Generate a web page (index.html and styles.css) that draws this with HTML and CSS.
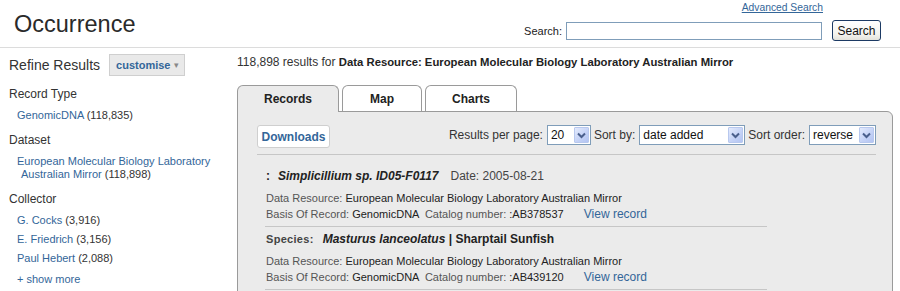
FILE: index.html
```html
<!DOCTYPE html>
<html lang="en">
<head>
<meta charset="utf-8">
<title>Occurrence</title>
<link rel="stylesheet" href="styles.css">
</head>
<body>
<header class="top">
  <h1 class="title">Occurrence</h1>
  <div class="search-area">
    <a class="adv" href="#">Advanced Search</a>
    <div class="search-row">
      <span class="search-label">Search:</span>
      <span class="search-input"></span>
      <span class="xp-btn">Search</span>
    </div>
  </div>
</header>

<div class="main">
  <aside class="sidebar">
    <div class="refine-row">
      <span class="refine-title">Refine Results</span>
      <span class="customise">customise <span class="caret">&#9662;</span></span>
    </div>

    <h3 class="facet">Record Type</h3>
    <ul class="facet-list">
      <li><a href="#">GenomicDNA</a> (118,835)</li>
    </ul>

    <h3 class="facet">Dataset</h3>
    <ul class="facet-list">
      <li><a href="#">European Molecular Biology Laboratory</a><br><a class="indent" href="#">Australian Mirror</a> (118,898)</li>
    </ul>

    <h3 class="facet">Collector</h3>
    <ul class="facet-list">
      <li><a href="#">G. Cocks</a> (3,916)</li>
      <li><a href="#">E. Friedrich</a> (3,156)</li>
      <li><a href="#">Paul Hebert</a> (2,088)</li>
      <li class="more"><a href="#">+ show more</a></li>
    </ul>
  </aside>

  <section class="content">
    <p class="summary">118,898 results for <b>Data Resource: European Molecular Biology Laboratory Australian Mirror</b></p>

    <div class="tabs">
      <span class="tab active tab-records">Records</span>
      <span class="tab tab-map">Map</span>
      <span class="tab tab-charts">Charts</span>
    </div>

    <div class="panel">
      <div class="toolbar">
        <span class="downloads">Downloads</span>
        <div class="sorts">
          <span class="lbl">Results per page:</span>
          <span class="sel sel-20"><span class="sel-val">20</span><span class="sel-arrow"><svg width="9" height="7" viewBox="0 0 9 7"><path d="M1 1.5 L4.5 5 L8 1.5" fill="none" stroke="#4a5f8c" stroke-width="2"/></svg></span></span>
          <span class="lbl">Sort by:</span>
          <span class="sel sel-date"><span class="sel-val">date added</span><span class="sel-arrow"><svg width="9" height="7" viewBox="0 0 9 7"><path d="M1 1.5 L4.5 5 L8 1.5" fill="none" stroke="#4a5f8c" stroke-width="2"/></svg></span></span>
          <span class="lbl">Sort order:</span>
          <span class="sel sel-order"><span class="sel-val">reverse</span><span class="sel-arrow"><svg width="9" height="7" viewBox="0 0 9 7"><path d="M1 1.5 L4.5 5 L8 1.5" fill="none" stroke="#4a5f8c" stroke-width="2"/></svg></span></span>
        </div>
      </div>

      <div class="records">
        <div class="record">
          <div class="rec-title"><b class="colon">:</b><b><i>Simplicillium sp. ID05-F0117</i></b><span class="rec-date">Date: 2005-08-21</span></div>
          <div class="rec-line"><span class="k">Data Resource:</span> European Molecular Biology Laboratory Australian Mirror</div>
          <div class="rec-line"><span class="k">Basis Of Record:</span> GenomicDNA <span class="k cat">Catalog number:</span> :AB378537 <a class="view" href="#">View record</a></div>
        </div>
        <div class="record">
          <div class="rec-title"><span class="species">Species:</span><b><i>Masturus lanceolatus</i></b> <b>| Sharptail Sunfish</b></div>
          <div class="rec-line"><span class="k">Data Resource:</span> European Molecular Biology Laboratory Australian Mirror</div>
          <div class="rec-line"><span class="k">Basis Of Record:</span> GenomicDNA <span class="k cat">Catalog number:</span> :AB439120 <a class="view" href="#">View record</a></div>
        </div>
      </div>
    </div>
  </section>
</div>
</body>
</html>
```

FILE: styles.css
```css
* { box-sizing: border-box; }

html, body {
  margin: 0;
  padding: 0;
  background: #fff;
  font-family: "Liberation Sans", Arial, sans-serif;
  color: #333;
  overflow: hidden;
}

a { color: #336699; text-decoration: none; }

/* ---------- header ---------- */
.top {
  display: flex;
  justify-content: space-between;
  align-items: flex-start;
  height: 48px;
  border-bottom: 1px solid #dcdcdc;
  padding: 0 19px 0 14px;
}

.title {
  margin: 10px 0 0;
  font-size: 23.5px;
  line-height: 28px;
  font-weight: normal;
  color: #2a2a2a;
}

.search-area {
  display: flex;
  flex-direction: column;
  align-items: flex-end;
  padding-top: 2px;
}

.adv {
  font-size: 10.3px;
  line-height: 12px;
  text-decoration: underline;
  margin-right: 58px;
  margin-bottom: 6px;
}

.search-row {
  display: flex;
  align-items: center;
  height: 21px;
}

.search-label {
  font-size: 11px;
  color: #222;
  margin-right: 4px;
}

.search-input {
  display: block;
  width: 256px;
  height: 18px;
  border: 1px solid #7f9db9;
  background: #fff;
  margin-right: 10px;
}

.xp-btn {
  display: flex;
  align-items: center;
  justify-content: center;
  width: 49px;
  height: 21px;
  border: 1px solid #1c3a64;
  border-radius: 3px;
  background: linear-gradient(#ffffff, #f3f3ee 70%, #e3e2da);
  font-size: 12px;
  color: #111;
}

/* ---------- main ---------- */
.main {
  display: flex;
  align-items: flex-start;
}

.sidebar {
  width: 237px;
  flex: none;
  padding: 6px 0 0 9px;
}

.refine-row {
  display: flex;
  align-items: center;
  height: 22px;
}

.refine-title {
  font-size: 14px;
  color: #333;
  margin-right: 9px;
}

.customise {
  display: flex;
  align-items: center;
  height: 22px;
  padding: 0 5px 0 6px;
  border: 1px solid #cfcfcf;
  background: #e9e9e9;
  font-size: 11px;
  font-weight: bold;
  color: #336699;
}

.caret {
  color: #888;
  font-size: 9px;
  margin-left: 4px;
  font-weight: normal;
}

.facet {
  margin: 10px 0 0;
  font-size: 12px;
  line-height: 16px;
  font-weight: normal;
  color: #333;
}

.facet-list {
  list-style: none;
  margin: 0;
  padding: 1px 0 0 8px;
  font-size: 11px;
  line-height: 13px;
  color: #333;
}

.facet-list li { margin-top: 6px; }

.facet-list .indent { margin-left: 4px; }

.facet-list li.more { margin-top: 8px; }

/* ---------- content ---------- */
.content {
  flex: 1;
  padding-top: 6px;
  margin-right: 7px;
}

.summary {
  margin: 0;
  font-size: 12px;
  line-height: 16px;
  color: #333;
}

.summary b {
  color: #222;
  font-size: 11.3px;
}

.tabs {
  display: flex;
  gap: 3px;
  margin-top: 15px;
  height: 26px;
}

.tab {
  display: flex;
  align-items: center;
  justify-content: center;
  height: 26px;
  border: 1px solid #9a9a9a;
  border-bottom: none;
  border-radius: 6px 6px 0 0;
  background: #fff;
  font-size: 12px;
  font-weight: bold;
  color: #222;
}

.tab.active {
  position: relative;
  height: 27px;
  margin-bottom: -1px;
  background: #ebebeb;
  z-index: 1;
}

.tab-records { width: 102px; }
.tab-map { width: 80px; }
.tab-charts { width: 92px; }

.panel {
  border: 1px solid #9a9a9a;
  border-radius: 0 6px 0 0;
  background: #ebebeb;
  padding: 12px 16px 20px 19px;
}

.toolbar {
  display: flex;
  justify-content: space-between;
  align-items: flex-start;
  padding-bottom: 6px;
  border-bottom: 1px solid #c6c6c6;
}

.downloads {
  display: flex;
  align-items: center;
  justify-content: center;
  margin-top: 1px;
  width: 73px;
  height: 23px;
  border: 1px solid #cfcfcf;
  border-radius: 3px;
  background: #fff;
  font-size: 12px;
  font-weight: bold;
  color: #336699;
}

.sorts {
  display: flex;
  align-items: center;
  gap: 3px;
  height: 20px;
  margin-top: 1px;
}

.lbl {
  font-size: 12px;
  color: #333;
}

.lbl + .sel { margin-left: 1px; }

.sel {
  display: flex;
  align-items: center;
  justify-content: space-between;
  height: 20px;
  border: 1px solid #7f9db9;
  background: #fff;
  padding: 0 1px 0 3px;
  font-size: 12px;
  color: #111;
}

.sel-20 { width: 44px; }
.sel-date { width: 106px; }
.sel-order { width: 67px; }

.sel-arrow {
  display: flex;
  align-items: center;
  justify-content: center;
  width: 15px;
  height: 16px;
  border: 1px solid #b8c8ee;
  border-radius: 1px;
  background: linear-gradient(135deg, #e4ebfd, #c3d1f6 60%, #b3c4f2);
}

.records {
  margin: 9px 0 0 8px;
  width: 502px;
}

.record {
  padding: 4px 0 4px 1px;
  border-bottom: 1px solid #c6c6c6;
}

.rec-title {
  font-size: 12px;
  line-height: 16px;
  color: #222;
  margin-bottom: 6px;
}

.colon { margin-right: 8px; }

.rec-date {
  margin-left: 12px;
  color: #444;
}

.species {
  font-weight: bold;
  color: #444;
  letter-spacing: 0.3px;
  font-size: 11px;
  margin-right: 9px;
}

.rec-line {
  font-size: 11px;
  line-height: 16px;
  color: #222;
}

.k { color: #555; }
.cat { margin-left: 3px; }

.view {
  margin-left: 17px;
  font-size: 12px;
}
```
